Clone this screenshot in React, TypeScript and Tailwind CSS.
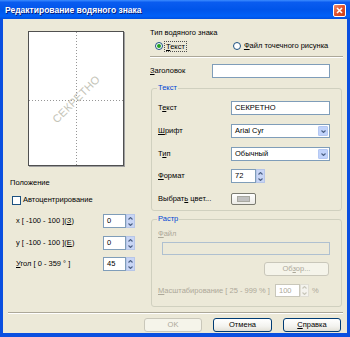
import React from "react";

const F = "font-['Liberation_Sans',Arial,sans-serif]";

function Chevron({ up = false, color = "#4D6185" }: { up?: boolean; color?: string }) {
  return (
    <svg width="5" height="3" viewBox="0 0 5 3" className="block">
      <path d={up ? "M0.5 2.5 L2.5 0.5 L4.5 2.5" : "M0.5 0.5 L2.5 2.5 L4.5 0.5"} fill="none" stroke={color} strokeWidth="1.1" />
    </svg>
  );
}

function Spin({ value, disabled = false, w = 23, h = 14 }: { value: string; disabled?: boolean; w?: number; h?: number }) {
  return (
    <div className="flex" style={{ height: h }}>
      <div
        className={`flex items-center pl-[3px] bg-white border ${disabled ? "border-[#C9C7BA] text-[#ACA899]" : "border-[#7F9DB9] text-black"}`}
        style={{ width: w }}
      >
        {value}
      </div>
      <div className={`w-[9px] flex flex-col border ${disabled ? "border-[#E0DED4] bg-[#F4F3EE]" : "border-[#B7C6E8] bg-[#C8D5F5]"}`}>
        <div className="flex-1 flex items-center justify-center">
          <Chevron up color={disabled ? "#C9C7BA" : "#4D6185"} />
        </div>
        <div className="flex-1 flex items-center justify-center">
          <Chevron color={disabled ? "#C9C7BA" : "#4D6185"} />
        </div>
      </div>
    </div>
  );
}

function Combo({ value }: { value: string }) {
  return (
    <div className="w-[99px] h-[14px] flex items-center bg-white border border-[#7F9DB9] pl-[3px] pr-[1px]">
      <span className="flex-1">{value}</span>
      <div className="w-[10px] h-[10px] bg-[#C1D3FB] border border-[#B5C8F3] rounded-[1px] flex items-center justify-center">
        <Chevron />
      </div>
    </div>
  );
}

function XPButton({ label, disabled = false, w }: { label: React.ReactNode; disabled?: boolean; w: number }) {
  return (
    <div
      className={`h-[14px] flex items-center justify-center rounded-[3px] border ${
        disabled
          ? "border-[#C9C7BA] text-[#ACA899] bg-[#F5F4EA]"
          : "border-[#003C74] text-black bg-[linear-gradient(to_bottom,#FFFFFF,#F3F3EF_60%,#E3E1D8)]"
      }`}
      style={{ width: w }}
    >
      {label}
    </div>
  );
}

function Radio({ checked }: { checked: boolean }) {
  return (
    <div className="w-[8px] h-[8px] rounded-full border border-[#1C5180] bg-white flex items-center justify-center">
      {checked && <div className="w-[4px] h-[4px] rounded-full bg-[#21A121]" />}
    </div>
  );
}

function Group({ title, children, h }: { title: string; children: React.ReactNode; h: number }) {
  return (
    <div className="relative ml-[1px] w-[191px] border border-[#D0D0BF] rounded-[3px]" style={{ height: h }}>
      <div className="absolute -top-[6px] left-[5px] px-[1px] bg-[#ECE9D8] text-[#0046D5] leading-[10px]">{title}</div>
      {children}
    </div>
  );
}

export default function App() {
  return (
    <div className={`w-[350px] h-[337px] flex flex-col bg-[#0A4FE0] ${F} text-[7.5px] leading-[10px] text-black`}>
      {/* Title bar */}
      <div className="h-[19px] flex items-center pl-[5px] pr-[4px] bg-[linear-gradient(to_bottom,#3C8CFF_0%,#0A5CF0_12%,#0055EA_50%,#0060F8_85%,#0050E0_100%)]">
        <span className="flex-1 text-white font-bold text-[8.5px] [text-shadow:1px_1px_0_#0A1E7A]">
          Редактирование водяного знака
        </span>
        <div className="w-[13px] h-[13px] mt-[2px] rounded-[2px] border border-white bg-[linear-gradient(135deg,#F09070,#E0502A_50%,#C8401C)] flex items-center justify-center">
          <svg width="7" height="7" viewBox="0 0 7 7">
            <path d="M1 1 L6 6 M6 1 L1 6" stroke="white" strokeWidth="1.6" />
          </svg>
        </div>
      </div>

      {/* Body */}
      <div className="mx-[3px] h-[314px] bg-[#ECE9D8] flex flex-col">
        <div className="h-[293px] flex">
          {/* Left column */}
          <div className="w-[147px] flex flex-col">
            <div className="mt-[12px] ml-[25px] w-[96px] h-[135px] relative bg-white border border-[#505050] shadow-[1px_1px_0_#A0A0A0] overflow-hidden">
              <div className="absolute left-[47px] top-0 bottom-0 w-[1px] bg-[repeating-linear-gradient(to_bottom,#969696_0px,#969696_1px,transparent_1px,transparent_3px)]" />
              <div className="absolute top-[68px] left-0 right-0 h-[1px] bg-[repeating-linear-gradient(to_right,#969696_0px,#969696_1px,transparent_1px,transparent_3px)]" />
              <div className="absolute inset-0 flex items-center justify-center">
                <span className="-rotate-45 text-[11px] text-[#C4C4B8] tracking-[0.3px] font-['Liberation_Sans',Arial,sans-serif]">СЕКРЕТНО</span>
              </div>
            </div>
            <div className="mt-[12px] ml-[7px] h-[10px]">Положение</div>
            <div className="mt-[7px] ml-[9px] h-[10px] flex items-center">
              <div className="w-[9px] h-[9px] border border-[#1C5180] bg-white" />
              <span className="ml-[2px]">Автоцентрирование</span>
            </div>
            <div className="mt-[9px] ml-[13px] h-[14px] flex items-center">
              <span className="w-[87px]">x [ -100 - 100 ](<u>З</u>)</span>
              <Spin value="0" />
            </div>
            <div className="mt-[8px] ml-[13px] h-[14px] flex items-center">
              <span className="w-[87px]">y [ -100 - 100 ](<u>Е</u>)</span>
              <Spin value="0" />
            </div>
            <div className="mt-[7px] ml-[13px] h-[14px] flex items-center">
              <span className="w-[87px]"><u>У</u>гол [ 0 - 359 ° ]</span>
              <Spin value="45" />
            </div>
          </div>

          {/* Right column */}
          <div className="w-[193px] flex flex-col">
            <div className="mt-[9px] h-[10px]">Тип водяного знака</div>
            <div className="mt-[3px] h-[10px] flex items-center">
              <div className="ml-[5px] flex items-center">
                <Radio checked />
                <span className="ml-[2px] px-[1px] outline outline-1 outline-dotted outline-[#505050] leading-[9px]"><u>Т</u>екст</span>
              </div>
              <div className="ml-[47px] flex items-center">
                <Radio checked={false} />
                <span className="ml-[3px]"><u>Ф</u>айл точечного рисунка</span>
              </div>
            </div>
            <div className="mt-[5px] h-[2px] border-t border-[#ACA899] border-b border-b-white" />
            <div className="mt-[6px] h-[14px] flex items-center">
              <span className="w-[62px]"><u>З</u>аголовок</span>
              <div className="w-[118px] h-[14px] bg-white border border-[#7F9DB9]" />
            </div>

            <div className="mt-[10px]">
              <Group title="Текст" h={123}>
                <div className="pt-[12px] pl-[6px] flex flex-col">
                  <div className="h-[14px] flex items-center">
                    <span className="w-[73px]">Т<u>е</u>кст</span>
                    <div className="w-[99px] h-[14px] bg-white border border-[#7F9DB9] pl-[3px] flex items-center">СЕКРЕТНО</div>
                  </div>
                  <div className="mt-[9px] h-[14px] flex items-center">
                    <span className="w-[73px]"><u>Ш</u>рифт</span>
                    <Combo value="Arial Cyr" />
                  </div>
                  <div className="mt-[9px] h-[14px] flex items-center">
                    <span className="w-[73px]">Т<u>и</u>п</span>
                    <Combo value="Обычный" />
                  </div>
                  <div className="mt-[8px] h-[14px] flex items-center">
                    <span className="w-[73px]"><u>Ф</u>ормат</span>
                    <Spin value="72" w={25} />
                  </div>
                  <div className="mt-[9px] h-[13px] flex items-center">
                    <span className="w-[73px]">Выбрат<u>ь</u> цвет...</span>
                    <div className="w-[25px] h-[12px] rounded-[2px] border border-[#7A7A70] bg-[linear-gradient(to_bottom,#FFFFFF,#ECEBE6)] flex items-center justify-center">
                      <div className="w-[13px] h-[6px] bg-[#C0C0C0] border border-[#A8A8A0]" />
                    </div>
                  </div>
                </div>
              </Group>
            </div>

            <div className="mt-[8px]">
              <Group title="Растр" h={88}>
                <div className="pt-[9px] pl-[6px] flex flex-col text-[#ACA899]">
                  <div className="h-[10px]"><u>Ф</u>айл</div>
                  <div className="mt-[3px] ml-[4px] w-[168px] h-[13px] bg-[#ECE9D8] border border-[#AFC0D0]" />
                  <div className="mt-[7px] ml-[106px]">
                    <XPButton disabled w={65} label={<span>Об<u>з</u>ор...</span>} />
                  </div>
                  <div className="mt-[8px] h-[13px] flex items-center">
                    <span className="w-[117px]"><u>М</u>асштабирование [ 25 - 999 % ]</span>
                    <Spin value="100" disabled w={25} h={13} />
                    <span className="ml-[3px]">%</span>
                  </div>
                </div>
              </Group>
            </div>
          </div>
        </div>

        <div className="ml-[5px] mr-[4px] h-[2px] border-t border-[#ACA899] border-b border-b-white" />
        <div className="mt-[4px] h-[14px] flex justify-end pr-[6px] gap-[11px]">
          <XPButton disabled w={58} label="OK" />
          <XPButton w={59} label="Отмена" />
          <XPButton w={58} label={<span><u>С</u>правка</span>} />
        </div>
      </div>
    </div>
  );
}
